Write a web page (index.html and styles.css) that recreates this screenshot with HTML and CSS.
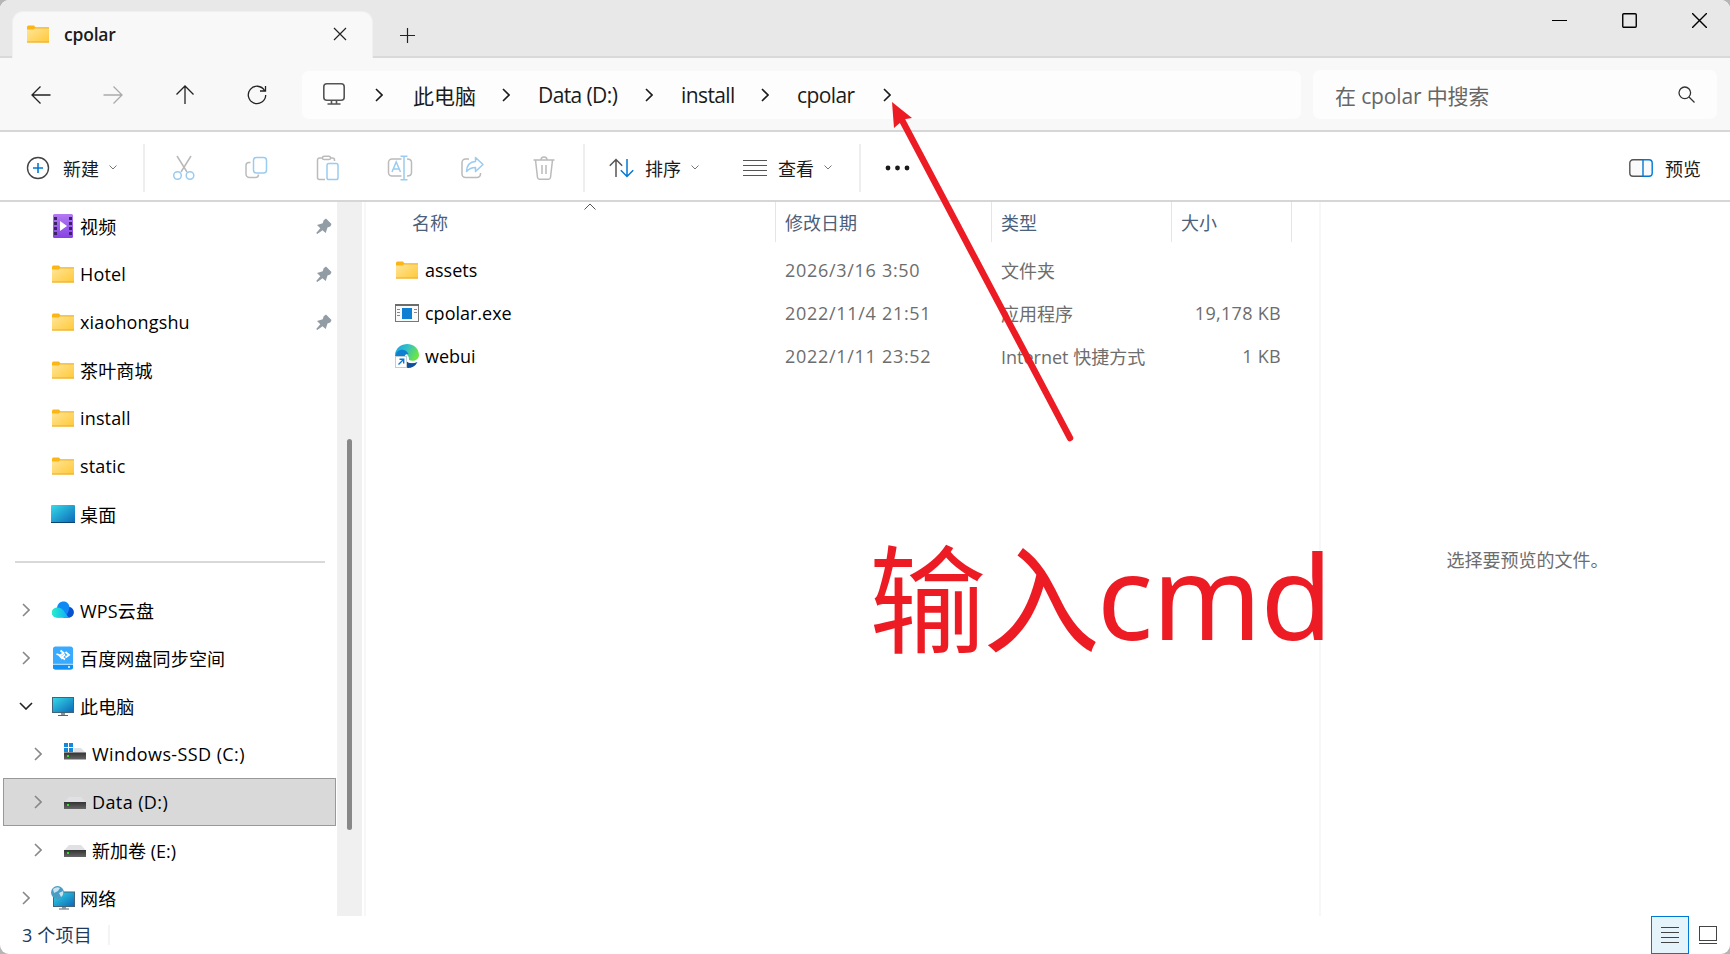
FILE: index.html
```html
<!DOCTYPE html>
<html lang="zh-CN">
<head>
  <meta charset="UTF-8">
  <title>cpolar</title>
  <link rel="stylesheet" href="styles.css">
</head>

<body>
<!-- Shared icons -->
<svg class="defs" width="0" height="0">
  <defs>
    <linearGradient id="gFolder" x1="0" y1="0" x2="1" y2="1"><stop offset="0" stop-color="#ffe69c"/><stop offset="1" stop-color="#ffc937"/></linearGradient>
    <linearGradient id="gScreen" x1="0" y1="0" x2="1" y2="1"><stop offset="0" stop-color="#35dbe8"/><stop offset="1" stop-color="#0b66b8"/></linearGradient>
    <linearGradient id="gVideo" x1="0" y1="0" x2="0" y2="1"><stop offset="0" stop-color="#b27af2"/><stop offset="1" stop-color="#8542e4"/></linearGradient>
    <linearGradient id="gCloud" x1="0" y1="0" x2="1" y2="0"><stop offset="0" stop-color="#25f0c8"/><stop offset="1" stop-color="#10a8ff"/></linearGradient>
    <linearGradient id="gEdge" x1="0" y1="0" x2="1" y2=".4"><stop offset="0" stop-color="#1c9fe4"/><stop offset=".5" stop-color="#31bfc8"/><stop offset="1" stop-color="#6be34a"/></linearGradient>
    <linearGradient id="gDrive" x1="0" y1="0" x2="0" y2="1"><stop offset="0" stop-color="#333"/><stop offset="1" stop-color="#666"/></linearGradient>
    <symbol id="folder" viewBox="0 0 24 24">
      <path d="M1 5q0-1.500 1.500-1.500h5.500l1.500 2v4H1z" fill="#fbb616"/>
      <path d="M1 7.500h7l1.500-2H23V20.500H1z" fill="url(#gFolder)"/>
      <path d="M9 5.900h14M1 20h22" stroke="#eeaa20" stroke-width="1"/>
    </symbol>
    <symbol id="pc" viewBox="0 0 24 24">
      <rect x="1.500" y="3.500" width="21" height="15" fill="url(#gScreen)" stroke="#42647a"/>
      <path d="M10 19h4v2h-4z" fill="#8a949c"/><path d="M7 21.500h10" stroke="#56626c"/>
    </symbol>
    <symbol id="drive" viewBox="0 0 24 24">
      <path d="M6 7h12l5 5.500H1z" fill="#dfe1e5"/>
      <rect x="1" y="12" width="22" height="7" fill="url(#gDrive)"/>
      <path d="M4 14h2v2H4z" fill="#2ce62c"/>
    </symbol>
    <symbol id="pin" viewBox="0 0 16 16">
      <path d="M10 .5l5.500 5.500-1.200 2.500-2.800 1-1.800 5.500-3.200-2.800L1.300 16 .2 15l4.100-4.700L1 7l5.700-1.800 1-3z" fill="#929ca4"/>
    </symbol>
    <symbol id="chev" viewBox="0 0 8 14"><path d="M1 1l6 6-6 6" fill="none" stroke="currentColor" stroke-width="1.600"/></symbol>
    <symbol id="down" viewBox="0 0 8 5"><path d="M.5.500L4 4 7.500.5" fill="none" stroke="#777" stroke-width="1"/></symbol>
  </defs>
</svg>

<div class="window">
  <div class="titlebar">
    <div class="tab">
      <svg class="icon"><use href="#folder"/></svg>
      <span class="tab-name">cpolar</span>
      <svg width="14" height="14" viewBox="0 0 14 14"><path d="M1 1l12 12M13 1L1 13" stroke="#222" stroke-width="1.200"/></svg>
    </div>
    <svg class="new-tab" width="16" height="16" viewBox="0 0 16 16"><path d="M1 8.500h15M8.500 1v15" stroke="#222" stroke-width="1.200"/></svg>
    <div class="controls">
      <svg width="15" height="15" viewBox="0 0 15 15"><path d="M0 7.500h15" stroke="#000"/></svg>
      <svg width="15" height="15" viewBox="0 0 15 15"><rect x=".75" y=".75" width="13.500" height="13.500" rx="1" fill="none" stroke="#000" stroke-width="1.400"/></svg>
      <svg width="15" height="15" viewBox="0 0 15 15"><path d="M0 0l15 15M15 0L0 15" stroke="#000" stroke-width="1.400"/></svg>
    </div>
  </div>

  <div class="navbar">
    <div class="nav-buttons">
      <svg width="20" height="20" viewBox="0 0 20 20"><path d="M19.500 10H1.500M9.500 1.500L1 10l8.500 8.500" /></svg>
      <svg class="off" width="20" height="20" viewBox="0 0 20 20"><path d="M.5 10h18M10.500 1.500L19 10l-8.500 8.500"/></svg>
      <svg width="20" height="20" viewBox="0 0 20 20"><path d="M10 19V1.500M1.500 9.500L10 1l8.500 8.500"/></svg>
      <svg width="20" height="20" viewBox="0 0 20 20"><path d="M17.500 5.500A8.700 8.700 0 1 0 18.700 10M18.500 1v5h-5.500"/></svg>
    </div>
    <div class="address">
      <svg class="monitor" width="24" height="24" viewBox="0 0 24 24" fill="none" stroke="#555" stroke-width="1.600"><rect x="1.800" y="1.800" width="20.400" height="16.400" rx="3"/><path d="M9.500 18v4M14.500 18v4M5.500 22h13"/></svg>
      <svg class="chev"><use href="#chev"/></svg>
      <span class="crumb c1">此电脑</span>
      <svg class="chev"><use href="#chev"/></svg>
      <span class="crumb c2">Data (D:)</span>
      <svg class="chev"><use href="#chev"/></svg>
      <span class="crumb c3">install</span>
      <svg class="chev"><use href="#chev"/></svg>
      <span class="crumb c4">cpolar</span>
      <svg class="chev"><use href="#chev"/></svg>
    </div>
    <div class="search">
      <span>在 cpolar 中搜索</span>
      <svg width="17" height="17" viewBox="0 0 17 17" fill="none" stroke="#333" stroke-width="1.300"><circle cx="6.800" cy="6.800" r="5.800"/><path d="M11 11l5.500 5.500"/></svg>
    </div>
  </div>

  <div class="toolbar">
    <div class="tool new">
      <svg width="24" height="24" viewBox="0 0 24 24" fill="none"><circle cx="12" cy="12" r="10.500" stroke="#444" stroke-width="1.400"/><path d="M7 12h10M12 7v10" stroke="#0078d4" stroke-width="1.600"/></svg>
      <span>新建</span>
      <svg class="down"><use href="#down"/></svg>
    </div>
    <div class="tool edit">
      <svg width="24" height="26" viewBox="0 0 24 26" fill="none" stroke-width="1.500"><path d="M5 1l10 16M19 1L9 17" stroke="#b9b9b9"/><circle cx="5.500" cy="20.500" r="3.800" stroke="#9acbf0"/><circle cx="18" cy="20.500" r="3.800" stroke="#9acbf0"/></svg>
      <svg width="24" height="26" viewBox="0 0 24 26" fill="none" stroke-width="1.500"><path d="M6.500 7.500H5a3 3 0 0 0-3 3V19a3.500 3.500 0 0 0 3.500 3.500h6a3 3 0 0 0 3-3" stroke="#bbb"/><rect x="9.500" y="2.500" width="13" height="15.500" rx="3" stroke="#9acbf0"/></svg>
      <svg width="24" height="26" viewBox="0 0 24 26" fill="none" stroke-width="1.500"><path d="M9 24.500H3.500a2 2 0 0 1-2-2V5a2 2 0 0 1 2-2H6M14 3h2.500a2 2 0 0 1 2 2v1" stroke="#bbb"/><rect x="6.500" y="1.200" width="8" height="3.300" rx="1.600" stroke="#bbb"/><rect x="11" y="8.500" width="11" height="16" rx="1.800" stroke="#9acbf0"/></svg>
      <svg width="26" height="26" viewBox="0 0 26 26" fill="none" stroke-width="1.500"><path d="M14.500 4H5a3.500 3.500 0 0 0-3.500 3.500v10A3.500 3.500 0 0 0 5 21h9.500M20 4q4.500 0 4.500 3.500v10Q24.500 21 20 21" stroke="#bbb"/><path d="M5 17l4.200-10L13.500 17M6.500 14h5.500M13.500 1.200h7M17 1.200v23.600M13.500 24.800h7" stroke="#9acbf0"/></svg>
      <svg width="26" height="26" viewBox="0 0 26 26" fill="none" stroke-width="1.500"><path d="M10 4H6.500A3.500 3.500 0 0 0 3 7.500V19a3.500 3.500 0 0 0 3.500 3.500H18a3.500 3.500 0 0 0 3.500-3.500v-1" stroke="#bbb"/><path d="M16.500 2.500l7.500 7-7.500 7v-4q-5.500 0-9 4Q8 7 16.500 6.500z" stroke="#9acbf0" stroke-linejoin="round"/></svg>
      <svg width="24" height="26" viewBox="0 0 24 26" fill="none" stroke="#bbb" stroke-width="1.500"><path d="M1.500 5h21M3.500 5l2 17.500a2 2 0 0 0 2 1.700h9a2 2 0 0 0 2-1.700L20.500 5M9 5a3 3 0 0 1 6 0M10 10v9M14 10v9"/></svg>
    </div>
    <div class="tool sort">
      <svg width="25" height="20" viewBox="0 0 25 20" fill="none" stroke-width="1.500"><path d="M7 19V1.500M.8 7.800L7 1.500l6.200 6.300" stroke="#555"/><path d="M18 1v17.500M11.800 12.200L18 18.500l6.200-6.300" stroke="#0078d4"/></svg>
      <span>排序</span>
      <svg class="down"><use href="#down"/></svg>
      <svg class="lines" width="24" height="18" viewBox="0 0 24 18"><path d="M0 1.500h24M0 6.500h24M0 11.500h24M0 16.500h24" stroke="#555" stroke-width="1.200"/></svg>
      <span>查看</span>
      <svg class="down"><use href="#down"/></svg>
    </div>
    <div class="tool more">
      <svg width="26" height="6" viewBox="0 0 26 6" fill="#1a1a1a"><circle cx="3" cy="3" r="2.400"/><circle cx="12.500" cy="3" r="2.400"/><circle cx="22" cy="3" r="2.400"/></svg>
    </div>
    <div class="tool preview-btn">
      <svg width="24" height="18" viewBox="0 0 24 18" stroke-width="1.400" fill="#fafafa"><path d="M14 .8H4A3.200 3.200 0 0 0 .8 4v10A3.200 3.200 0 0 0 4 17.200h10" stroke="#555"/><path d="M14 .8h6A3.200 3.200 0 0 1 23.200 4v10a3.200 3.200 0 0 1-3.200 3.200h-6z" stroke="#0078d4"/></svg>
      <span>预览</span>
    </div>
  </div>

  <div class="content">
    <div class="sidebar">
      <div class="item"><svg class="icon" viewBox="0 0 24 24"><rect x="2" width="20" height="24" rx="1.500" fill="url(#gVideo)"/><path d="M4.500 3v20M19.500 3v20" stroke="#3b2266" stroke-width="3" stroke-dasharray="3 2"/><path d="M9 7l7 5-7 5z" fill="#fff"/></svg><span>视频</span><svg class="pin"><use href="#pin"/></svg></div>
      <div class="item"><svg class="icon"><use href="#folder"/></svg><span>Hotel</span><svg class="pin"><use href="#pin"/></svg></div>
      <div class="item"><svg class="icon"><use href="#folder"/></svg><span>xiaohongshu</span><svg class="pin"><use href="#pin"/></svg></div>
      <div class="item"><svg class="icon"><use href="#folder"/></svg><span>茶叶商城</span></div>
      <div class="item"><svg class="icon"><use href="#folder"/></svg><span>install</span></div>
      <div class="item"><svg class="icon"><use href="#folder"/></svg><span>static</span></div>
      <div class="item"><svg class="icon" viewBox="0 0 24 24"><rect y="3" width="24" height="18" rx="1" fill="url(#gScreen)"/><path d="M0 20.500h24" stroke="#0c4470"/></svg><span>桌面</span></div>
      <div class="separator"></div>
      <div class="item"><svg class="chev"><use href="#chev"/></svg><svg class="icon" viewBox="0 0 24 24"><path d="M6 19.500c-6 0-7-8.500 0-9.500C7 1 18 2 18.500 9c6 1 5.500 10.500-1 10.500z" fill="#0f8af5"/><path d="M12 19.500q5-1.500 6.500-10.500c6 1 5.500 10.500-1 10.500z" fill="#0a50d2"/><path d="M6 19.500c-7 0-7-10.500 1-10 6 .5 7 7 11 10z" fill="url(#gCloud)"/></svg><span>WPS云盘</span></div>
      <div class="item"><svg class="chev"><use href="#chev"/></svg><svg class="icon" viewBox="0 0 24 24"><rect x="2" y=".5" width="20" height="23" rx="2.500" fill="#38aaff"/><path d="M2 18h20v3q0 2.500-2.500 2.500h-15Q2 23.500 2 21z" fill="#0f91f5"/><path d="M2 18.300h20" stroke="#c8ecff"/><path d="M9.500 4.500l3 2.500-3 2.500-4-1.500M14.500 6l3.500 3-3.500 2.500M8 9l3.500 4M14 8.500l-3 2.500 3 2.500" stroke="#fff" stroke-width="1.800" fill="none"/><circle cx="18" cy="21" r="1" fill="#fff"/></svg><span>百度网盘同步空间</span></div>
      <div class="item"><svg class="chev open" viewBox="0 0 14 8"><path d="M1 1l6 6 6-6" fill="none" stroke="#222" stroke-width="1.600"/></svg><svg class="icon"><use href="#pc"/></svg><span>此电脑</span></div>
      <div class="item sub"><svg class="chev"><use href="#chev"/></svg><svg class="icon" viewBox="0 0 24 24"><path d="M9 6h9l5 5H1z" fill="#dfe1e5"/><rect x="1" y="10.500" width="22" height="7" fill="url(#gDrive)"/><path d="M4 13h2v2H4z" fill="#2ce62c"/><path d="M0 0h11v10H0z" fill="#fff"/><path d="M1 1h4v4H1zM6 1h4v4H6zM1 6h4v4H1zM6 6h4v4H6z" fill="#1389dc"/></svg><span>Windows-SSD (C:)</span></div>
      <div class="item sub selected"><svg class="chev"><use href="#chev"/></svg><svg class="icon"><use href="#drive"/></svg><span>Data (D:)</span></div>
      <div class="item sub"><svg class="chev"><use href="#chev"/></svg><svg class="icon"><use href="#drive"/></svg><span class="cn">新加卷 (E:)</span></div>
      <div class="item"><svg class="chev"><use href="#chev"/></svg><svg class="icon" viewBox="0 0 24 24"><rect x="2.500" y="6" width="21" height="14.500" fill="url(#gScreen)" stroke="#42647a"/><path d="M11 21h4v1.500h-4z" fill="#8a949c"/><path d="M8 23h10" stroke="#56626c"/><circle cx="6.500" cy="6.500" r="6.500" fill="#4a9cc4"/><path d="M2 3q4-3 7-1L7 5 3 7zM8 7l4-2q1 4-2 6z" fill="#c7e4f0"/></svg><span>网络</span></div>
    </div>
    <div class="scrollbar"><div class="thumb"></div></div>

    <div class="files">
      <div class="row head">
        <span class="name">名称</span>
        <span>修改日期</span>
        <span>类型</span>
        <span>大小</span>
        <svg class="sorted" width="12" height="7" viewBox="0 0 12 7"><path d="M.5 6.500L6 1l5.500 5.500" fill="none" stroke="#555"/></svg>
      </div>
      <div class="row">
        <span class="name"><svg class="icon"><use href="#folder"/></svg>assets</span>
        <span class="date">2026/3/16 3:50</span><span>文件夹</span><span class="size"></span>
      </div>
      <div class="row">
        <span class="name"><svg class="icon" viewBox="0 0 24 24"><rect x=".5" y="3.500" width="23" height="17" fill="#fafafa" stroke="#777"/><path d="M0 4h24" stroke="#6c6c6c" stroke-width="2"/><rect x="7" y="7" width="10" height="11" fill="#0f7fd4"/><path d="M2 8.500h3M2 11.500h3M2 14.500h3M19 8.500h3M19 11.500h3" stroke="#888"/></svg>cpolar.exe</span>
        <span class="date">2022/11/4 21:51</span><span>应用程序</span><span class="size">19,178 KB</span>
      </div>
      <div class="row">
        <span class="name"><svg class="icon" viewBox="0 0 24 24"><path d="M0 11C1-3 23-4 24 11c0 5-6 7-10 5 0-2 0-3-1-4C10 6 3 7 0 11z" fill="url(#gEdge)"/><path d="M0 12C2 4 11 4 13.500 10q-5-1-3.500 6 3 5 9 3-3 5-9 5C4 23 0 19 0 12z" fill="#0f80d0"/><path d="M11 17q4 4 11.500 1-3 6-10 6z" fill="#0d4fa0"/><rect x=".5" y="12.500" width="11" height="11" fill="#fff" stroke="#c4ccd4"/><path d="M3.500 20.500l5-5M4.500 15.300h4.200v4.200" stroke="#0078d4" stroke-width="1.400" fill="none"/></svg>webui</span>
        <span class="date">2022/1/11 23:52</span><span>Internet 快捷方式</span><span class="size">1 KB</span>
      </div>
    </div>

    <div class="preview">选择要预览的文件。</div>
  </div>

  <div class="statusbar">
    <span class="count">3 个项目</span>
    <div class="view active"><svg width="18" height="18" viewBox="0 0 18 18"><path d="M0 1.500h18M0 6.500h18M0 11.500h18M0 16.500h18" stroke="#444"/></svg></div>
    <div class="view"><svg width="18" height="18" viewBox="0 0 18 18" fill="none" stroke="#444"><rect x=".5" y=".5" width="17" height="14"/><path d="M0 17.500h18"/></svg></div>
  </div>

  <!-- Red marks over the window -->
  <svg class="arrow" width="200" height="350" viewBox="880 95 200 350">
    <path d="M903 122L1070 438" stroke="#ed1c24" stroke-width="6.500" stroke-linecap="round"/>
    <path d="M892 102l2 26 7-6 5-3 6-1z" fill="#ed1c24"/>
  </svg>
  <div class="note">输入<span>cmd</span></div>
</div>
</body>
</html>
```

FILE: styles.css
```css
* {
  box-sizing: border-box;
}

body {
  margin: 0;
  background: #b5b5b5;
  font-family: "Open Sans", "Noto Sans CJK SC", sans-serif;
  font-size: 18px;
  color: #000;
}

svg {
  display: block;
  flex: none;
}

.defs {
  position: absolute;
}

.window {
  position: relative;
  display: flex;
  flex-direction: column;
  width: 1730px;
  height: 954px;
  overflow: hidden;
  background: #fff;
  border-radius: 9px;
  white-space: nowrap;
}

.icon {
  width: 24px;
  height: 24px;
}

.chev {
  width: 8px;
  height: 14px;
}

.down {
  width: 8px;
  height: 5px;
}

/* Title bar */
.titlebar {
  display: flex;
  height: 58px;
  background: #e8e8e8;
  border-bottom: 2px solid #d9d9d9;
}

.tab {
  display: flex;
  align-items: center;
  width: 361px;
  height: 47px;
  margin: 11px 0 0 12px;
  padding: 0 25px 3px 13px;
  background: #f8f8f8;
  border: 1px solid #f0f0f0;
  border-bottom: 0;
  border-radius: 11px 11px 0 0;
}

.tab-name {
  flex: 1;
  margin-left: 14px;
  font-size: 17.5px;
  font-weight: 600;
  letter-spacing: -.2px;
  color: #1b1b1b;
}

.new-tab {
  margin: 27px 0 0 26px;
}

.controls {
  display: flex;
  gap: 55px;
  margin: 13px 23px 0 auto;
}

/* Address bar */
.navbar {
  display: flex;
  align-items: center;
  height: 74px;
  padding-top: 1px;
  background: #f8f8f8;
  border-bottom: 2px solid #d6d6d6;
}

.nav-buttons {
  display: flex;
  gap: 52px;
  width: 302px;
  padding-left: 31px;
}

.nav-buttons path {
  fill: none;
  stroke: #222;
  stroke-width: 1.3;
}

.nav-buttons .off path {
  stroke: #aaa;
}

.address {
  display: flex;
  align-items: center;
  width: 999px;
  height: 48px;
  padding-left: 20px;
  background: #fdfdfd;
  border-radius: 7px;
  font-size: 21px;
  color: #1b1b1b;
}

.monitor {
  margin: 0 29px 2px 0;
}

.crumb {
  margin-left: 30px;
}

.c1 {
  width: 89px;
}

.c2, .c3, .c4 {
  margin-left: 28px;
  letter-spacing: -.6px;
}

.c2 {
  width: 107px;
}

.c3 {
  width: 80px;
}

.c4 {
  width: 86px;
}

.search {
  display: flex;
  align-items: center;
  justify-content: space-between;
  width: 404px;
  height: 49px;
  margin-left: 12px;
  padding: 0 22px;
  background: #fdfdfd;
  border-radius: 7px;
  font-size: 21px;
  letter-spacing: -.15px;
  color: #666;
}

/* Toolbar */
.toolbar {
  display: flex;
  align-items: center;
  height: 70px;
  padding-top: 3px;
  border-bottom: 2px solid #d6d6d6;
  color: #1b1b1b;
}

.tool {
  display: flex;
  align-items: center;
  height: 48px;
  border-right: 2px solid #eee;
}

.new {
  width: 145px;
  padding-left: 26px;
}

.new span {
  margin: 0 10px 0 13px;
}

.edit {
  display: grid;
  grid-template-columns: repeat(6, 72px);
  justify-items: center;
  width: 440px;
  padding-left: 3px;
}

.sort {
  width: 276px;
  padding-left: 24px;
}

.sort span {
  margin: 0 10px 0 11px;
}

.sort .lines {
  margin-left: 44px;
}

.more {
  padding-left: 24px;
  border: 0;
}

.preview-btn {
  margin: 0 29px 0 auto;
  border: 0;
}

.preview-btn span {
  margin-left: 12px;
}

/* Main area */
.content {
  display: flex;
  height: 714px;
}

.sidebar {
  width: 337px;
  overflow: hidden;
}

.item {
  display: flex;
  align-items: center;
  height: 48px;
  margin: 0 1px 0 3px;
  padding-left: 48px;
}

.item span {
  margin-left: 5px;
  letter-spacing: .15px;
}

.item .chev {
  margin: 0 21px 0 -29px;
  color: #888;
}

.item .open {
  width: 14px;
  height: 8px;
  margin: 0 18px 0 -32px;
}

.sub {
  padding-left: 60px;
}

.sub span {
  letter-spacing: .4px;
}

.sub .cn {
  letter-spacing: 0;
}

.selected {
  padding-left: 59px;
  background: #d9d9d9;
  border: 1px solid #999;
}

.pin {
  width: 16px;
  height: 16px;
  margin: 0 4px 0 auto;
}

.separator {
  height: 2px;
  margin: 23px 12px 23px 15px;
  background: #d9d9d9;
}

.scrollbar {
  width: 29px;
  padding: 237px 0 0 10px;
  background: linear-gradient(to right, #f0f0f0 25px, #fff 25px, #fff 27px, #f7f7f7 27px);
}

.thumb {
  width: 5px;
  height: 391px;
  background: #888;
  border-radius: 3px;
}

/* File table */
.files {
  width: 953px;
}

.row {
  position: relative;
  display: grid;
  grid-template-columns: 410px 216px 180px 120px;
  align-items: center;
  height: 43px;
  color: #6d6d6d;
}

.row span {
  padding-left: 9px;
}

.row .name {
  display: flex;
  align-items: center;
  gap: 6px;
  padding-left: 29px;
  color: #000;
}

.row .date {
  letter-spacing: .7px;
}

.row .size {
  padding-right: 11px;
  text-align: right;
  letter-spacing: .3px;
}

.head {
  height: 40px;
  margin-bottom: 6px;
}

.head span {
  height: 40px;
  border-right: 1px solid #e5e5e5;
  line-height: 42px;
  color: #4c607a;
}

.row.head .name {
  padding: 2px 0 0 46px;
  color: #4c607a;
}

.sorted {
  position: absolute;
  top: 1px;
  left: 218px;
}

.preview {
  display: flex;
  flex: 1;
  align-items: center;
  justify-content: center;
  padding-left: 4px;
  border-left: 2px solid #f7f7f7;
  color: #6d6d6d;
}

/* Status bar */
.statusbar {
  display: flex;
  height: 38px;
}

.count {
  height: 20px;
  margin: 9px auto 0 22px;
  padding-right: 16px;
  border-right: 2px solid #f4f4f4;
  line-height: 20px;
  letter-spacing: .2px;
  color: #1e395b;
}

.view {
  display: flex;
  align-items: center;
  justify-content: center;
  width: 38px;
  height: 38px;
}

.view:last-child {
  margin-right: 3px;
}

.active {
  background: #e5f3fb;
  border: 1px solid #0078d7;
}

/* Marks */
.arrow {
  position: absolute;
  top: 95px;
  left: 880px;
}

.note {
  position: absolute;
  top: 514px;
  left: 869px;
  font-family: "Noto Sans", "Noto Sans CJK SC", sans-serif;
  font-size: 117px;
  letter-spacing: -3px;
  line-height: 170px;
  color: #ed1c24;
}

.note span {
  letter-spacing: -1px;
  line-height: 1;
  vertical-align: 4px;
}
```
